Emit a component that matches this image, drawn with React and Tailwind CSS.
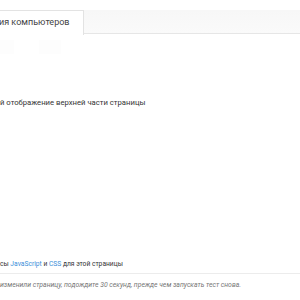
import React from 'react';

const App = () => {
  return (
    <div className="w-[300px] h-[300px] bg-white overflow-hidden relative font-['Roboto',sans-serif]">
      {/* Tabs */}
      <div className="mt-[10px] h-[24px] flex bg-gradient-to-b from-[#f7f7f7] to-[#fafafa] border-b border-[#e6e6e6]">
        <div className="w-[84px] h-[25px] bg-white border-r border-t border-[#e3e3e3] flex items-center shrink-0">
          <span className="text-[9px] text-[#444] whitespace-nowrap -ml-[1px]">ия компьютеров</span>
        </div>
        <div className="flex-1" />
      </div>

      {/* Faint placeholder blocks */}
      <div className="flex gap-[25px] mt-[6px]">
        <div className="w-[14px] h-[14px] bg-[#fdfdfd]" />
        <div className="w-[22px] h-[14px] bg-[#fdfdfd]" />
      </div>

      <div className="mt-[45px] text-[7.7px] text-[#333] whitespace-nowrap leading-none">
        й отображение верхней части страницы
      </div>

      <div className="mt-[154px] text-[6.7px] text-[#333] whitespace-nowrap leading-none">
        сы <span className="text-[#3b8fd9]">JavaScript</span> и <span className="text-[#3b8fd9]">CSS</span> для этой страницы
      </div>

      <div className="mt-[6px] border-t border-[#ececec]" />

      <div className="mt-[8px] text-[6.85px] italic text-[#777] whitespace-nowrap leading-none">
        изменили страницу, подождите 30 секунд, прежде чем запускать тест снова.
      </div>
    </div>
  );
};

export default App;
